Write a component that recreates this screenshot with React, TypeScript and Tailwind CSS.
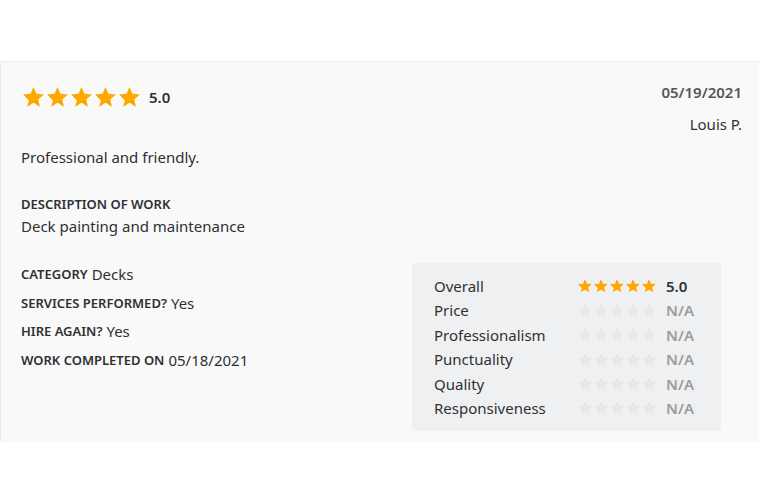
const STAR = "M12 17.27L18.18 21l-1.64-7.03L22 9.24l-7.19-.61L12 2 9.19 8.63 2 9.24l5.46 5.73L5.82 21z";

function Stars({ filled, size, gap }: { filled: number; size: "lg" | "sm"; gap: string }) {
  return (
    <div className={`flex ${gap}`}>
      {[0, 1, 2, 3, 4].map((i) => (
        <svg
          key={i}
          viewBox="2 2 20 19.3"
          className={size === "lg" ? "w-[21px] h-[20px]" : "w-[14px] h-[13.5px]"}
          fill={i < filled ? "#ffa800" : "#e6e7e8"}
        >
          <path d={STAR} />
        </svg>
      ))}
    </div>
  );
}

const details = [
  { label: "CATEGORY", value: "Decks" },
  { label: "SERVICES PERFORMED?", value: "Yes" },
  { label: "HIRE AGAIN?", value: "Yes" },
  { label: "WORK COMPLETED ON", value: "05/18/2021" },
];

const ratings = ["Price", "Professionalism", "Punctuality", "Quality", "Responsiveness"];

export default function App() {
  return (
    <div className="h-[504px] bg-white pt-[61px] overflow-hidden text-[#2f3033]" style={{ fontFamily: "'Noto Sans', Arial, sans-serif" }}>
      <div className="h-[381px] bg-[#f9f9f9] border-t border-l border-[#ebebeb] pl-5 pr-[17px] pt-[21px]">
        {/* header */}
        <div className="flex justify-between items-start">
          <div className="flex items-center gap-[9px] pl-[2px] pt-[4px]">
            <Stars filled={5} size="lg" gap="gap-[3px]" />
            <span className="text-[15px] font-semibold leading-[20px]">5.0</span>
          </div>
          <div className="flex flex-col items-end">
            <span className="text-[15px] font-semibold text-[#555659] leading-[18px]">05/19/2021</span>
            <span className="text-[15px] leading-[18px] mt-[14px]">Louis P.</span>
          </div>
        </div>

        <p className="text-[15px] leading-[20px] mt-[14px]">Professional and friendly.</p>

        <div className="mt-[29px]">
          <div className="text-[13px] font-semibold leading-[16px]">DESCRIPTION OF WORK</div>
          <div className="text-[15px] leading-[20px] mt-[4px]">Deck painting and maintenance</div>
        </div>

        <div className="flex mt-[24px]">
          <div className="w-[391px] flex flex-col">
            {details.map((d) => (
              <div key={d.label} className="h-[28.5px] flex items-center">
                <span className="text-[13px] font-semibold leading-[20px]">{d.label}</span>
                <span className="text-[15px] leading-[20px] ml-[4px]">{d.value}</span>
              </div>
            ))}
          </div>
          <div className="w-[309px] mt-[3px] h-[168px] rounded-[4px] bg-[#eff0f1] pl-[22px] pt-[11px]">
            <div className="flex items-center h-[24.4px]">
              <span className="w-[144px] text-[15px]">Overall</span>
              <Stars filled={5} size="sm" gap="gap-[2px]" />
              <span className="ml-[10px] text-[15px] font-semibold">5.0</span>
            </div>
            {ratings.map((r) => (
              <div key={r} className="flex items-center h-[24.4px]">
                <span className="w-[144px] text-[15px]">{r}</span>
                <Stars filled={0} size="sm" gap="gap-[2px]" />
                <span className="ml-[10px] text-[15px] font-semibold text-[#9a9b9d]">N/A</span>
              </div>
            ))}
          </div>
        </div>
      </div>
    </div>
  );
}
